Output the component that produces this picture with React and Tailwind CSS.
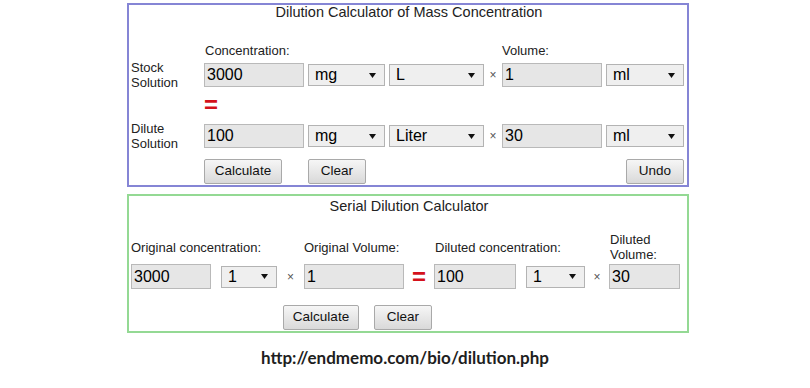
import React from "react";

const topCols =
  "grid grid-cols-[73px_100px_4px_77px_4px_95px_18px_100px_4px_78px] items-center";
const serialCols =
  "grid grid-cols-[80px_10px_56px_27px_100px_30px_82px_10px_59px_24px_71px] items-center";

const Field = ({ value, className = "" }) => (
  <input
    readOnly
    value={value}
    className={`block h-[24px] w-full border border-[#b9b9b9] bg-[#e6e6e6] px-[2px] text-[16px] text-black outline-none ${className}`}
  />
);

const Pick = ({ value }) => (
  <div className="flex h-[22px] w-full items-center justify-between border border-[#b3b3b3] bg-[#efefef] pl-[6px] pr-[8px] text-[16px] text-black">
    <span>{value}</span>
    <svg width="7" height="5" viewBox="0 0 7 5">
      <path d="M0 0h7L3.5 5z" fill="#111" />
    </svg>
  </div>
);

const Btn = ({ children, className = "" }) => (
  <button
    className={`h-[25px] rounded-[2px] border border-[#a9a9a9] bg-gradient-to-b from-[#f6f6f6] to-[#d9d9d9] text-[13.5px] text-[#111] ${className}`}
  >
    {children}
  </button>
);

const Times = () => (
  <div className="text-center text-[12px] text-[#555]">×</div>
);

const Equals = ({ className = "" }) => (
  <div className={`text-[24px] font-bold leading-none text-[#d4111b] ${className}`}>=</div>
);

export default function App() {
  return (
    <div className="min-h-[388px] w-[810px] bg-white pt-[3px] font-['Liberation_Sans',Arial,sans-serif] text-[#222]">
      <div className="ml-[127px] w-[562px]">
        {/* mass concentration */}
        <div className="h-[184px] border-2 border-[#8585d5] pl-[2px]">
          <div className="text-center text-[14.5px] leading-[14px]">
            Dilution Calculator of Mass Concentration
          </div>
          <div className={`${topCols} mt-[24px] text-[13px] leading-[15px]`}>
            <div />
            <div className="col-start-2 pl-px">Concentration:</div>
            <div className="col-start-8">Volume:</div>
          </div>
          <div className={`${topCols} mt-[5px] h-[24px] grid-rows-[24px]`}>
            <div className="text-[13px] leading-[15px]">
              Stock
              <br />
              Solution
            </div>
            <Field value="3000" />
            <div />
            <Pick value="mg" />
            <div />
            <Pick value="L" />
            <Times />
            <Field value="1" />
            <div />
            <Pick value="ml" />
          </div>
          <div className={`${topCols} h-[37px] grid-rows-[37px]`}>
            <div />
            <Equals className="-mt-[2px]" />
          </div>
          <div className={`${topCols} h-[24px] grid-rows-[24px]`}>
            <div className="text-[13px] leading-[15px]">
              Dilute
              <br />
              Solution
            </div>
            <Field value="100" />
            <div />
            <Pick value="mg" />
            <div />
            <Pick value="Liter" />
            <Times />
            <Field value="30" />
            <div />
            <Pick value="ml" />
          </div>
          <div className={`${topCols} mt-[11px]`}>
            <div />
            <Btn className="w-[78px]">Calculate</Btn>
            <div />
            <Btn className="col-start-4 w-[58px]">Clear</Btn>
            <Btn className="col-start-10 w-[58px] justify-self-end">Undo</Btn>
          </div>
        </div>

        {/* serial dilution */}
        <div className="mt-[7px] h-[139px] border-2 border-[#94d994] pl-[2px]">
          <div className="pt-[3px] text-center text-[14.5px] leading-[14px]">
            Serial Dilution Calculator
          </div>
          <div className={`${serialCols} mt-[19px] h-[30px] text-[13px] leading-[15px]`}>
            <div className="col-span-4 col-start-1 whitespace-nowrap">Original concentration:</div>
            <div className="col-span-2 col-start-5 whitespace-nowrap">Original Volume:</div>
            <div className="col-span-3 col-start-7 whitespace-nowrap pl-px">Diluted concentration:</div>
            <div className="col-start-11 pl-px">Diluted Volume:</div>
          </div>
          <div className={`${serialCols} mt-[2px] h-[25px]`}>
            <Field value="3000" className="h-[25px]" />
            <div />
            <Pick value="1" />
            <Times />
            <Field value="1" className="h-[25px]" />
            <Equals className="text-center" />
            <Field value="100" className="h-[25px]" />
            <div />
            <Pick value="1" />
            <Times />
            <Field value="30" className="h-[25px]" />
          </div>
          <div className="mt-[16px] flex gap-[15px] pl-[152px]">
            <Btn className="w-[76px]">Calculate</Btn>
            <Btn className="w-[58px]">Clear</Btn>
          </div>
        </div>
      </div>

      <div className="mt-[15px] text-center font-['Lato',sans-serif] text-[17px] font-bold leading-[20px] text-[#1e1e1e]">
        http://endmemo.com/bio/dilution.php
      </div>
    </div>
  );
}
